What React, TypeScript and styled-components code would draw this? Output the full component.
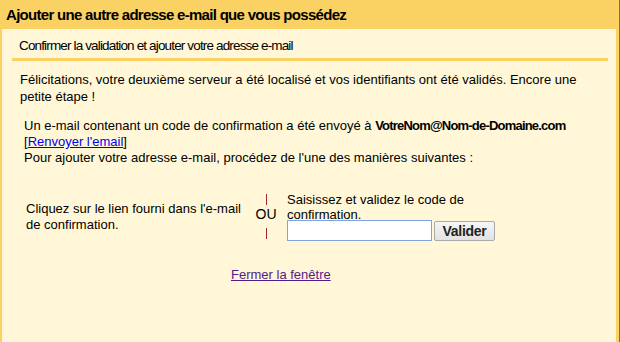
import React from "react";
import styled, { createGlobalStyle } from "styled-components";

const Global = createGlobalStyle`
  html, body { margin: 0; padding: 0; background: #fff7d7; }
  body { font-family: Arial, "Liberation Sans", sans-serif; font-size: 13px; color: #000; }
`;

const Window = styled.div`
  width: 619px;
  height: 342px;
  background: #fad163;
  border-right: 1px solid #3a7fc0;
  display: flex;
  flex-direction: column;
  overflow: hidden;
`;

const TitleBar = styled.div`
  height: 29px;
  flex: none;
  display: flex;
  align-items: center;
  padding: 0 0 1px 6px;
  box-sizing: border-box;
  font-size: 15px;
  letter-spacing: -0.7px;
  font-weight: bold;
  color: #000;
`;

const Body = styled.div`
  flex: 1;
  margin: 0 3px 0 2px;
  background: #fff7d7;
  padding: 0 8px 0 10px;
`;

const SubHeader = styled.div`
  padding: 9px 0 0 7px;
  height: 32px;
  box-sizing: border-box;
  border-bottom: 3px solid #fad163;
  font-size: 13.5px;
  letter-spacing: -0.85px;
  color: #000;
`;

const Para = styled.p<{ $indent?: number; $top?: number; $lh?: number }>`
  margin: ${(p) => p.$top ?? 0}px 0 0 ${(p) => p.$indent ?? 8}px;
  line-height: ${(p) => p.$lh ?? 17}px;
  font-size: 13px;
`;

const Email = styled.b`
  letter-spacing: -0.8px;
`;

const Link = styled.a<{ $visited?: boolean }>`
  color: ${(p) => (p.$visited ? "#551a8b" : "#0000ee")};
  text-decoration: underline;
  cursor: pointer;
`;

const Choices = styled.div`
  display: flex;
  align-items: center;
  margin: 26px 0 0 14px;
`;

const LeftChoice = styled.div`
  width: 229px;
  line-height: 16px;
`;

const OrColumn = styled.div`
  width: 22px;
  display: flex;
  flex-direction: column;
  align-items: center;
  font-size: 14px;
  line-height: 16px;
`;

const RedBar = styled.span<{ $gap: number; $after?: boolean }>`
  width: 1px;
  height: 11px;
  background: #b22222;
  ${(p) => (p.$after ? `margin-top: ${p.$gap}px;` : `margin-bottom: ${p.$gap}px;`)}
`;

const RightChoice = styled.div`
  margin-left: 10px;
  display: flex;
  flex-direction: column;
`;

const Hint = styled.div`
  line-height: 15px;
  width: 190px;
`;

const FormRow = styled.div`
  display: flex;
  align-items: center;
  margin-top: -2px;
`;

const CodeInput = styled.input`
  width: 145px;
  height: 21px;
  box-sizing: border-box;
  border: 1px solid #7ea5e0;
  background: #fff;
  padding: 2px 3px;
  font-family: inherit;
  font-size: 13px;
  outline: none;
`;

const Button = styled.button`
  margin-left: 2px;
  height: 20px;
  width: 61px;
  box-sizing: border-box;
  border: 1px solid #a9a9a9;
  border-radius: 2px;
  background: linear-gradient(#f6f6f6, #e2e2e2);
  font-family: inherit;
  font-size: 14px;
  letter-spacing: -0.3px;
  font-weight: bold;
  color: #222;
  padding: 0;
`;

const Footer = styled.div`
  margin-top: 26px;
  padding-left: 219px;
  font-size: 13px;
`;

export default function App() {
  return (
    <>
      <Global />
      <Window>
        <TitleBar>Ajouter une autre adresse e-mail que vous possédez</TitleBar>
        <Body>
          <SubHeader>Confirmer la validation et ajouter votre adresse e-mail</SubHeader>
          <Para $top={10}>
            Félicitations, votre deuxième serveur a été localisé et vos identifiants ont été validés. Encore une petite étape !
          </Para>
          <Para $indent={12} $top={13} $lh={16}>
            Un e-mail contenant un code de confirmation a été envoyé à <Email>VotreNom@Nom-de-Domaine.com</Email>
            <br />[<Link>Renvoyer l'email</Link>]
            <br />Pour ajouter votre adresse e-mail, procédez de l'une des manières suivantes :
          </Para>
          <Choices>
            <LeftChoice>Cliquez sur le lien fourni dans l'e-mail de confirmation.</LeftChoice>
            <OrColumn>
              <RedBar $gap={1} />
              <span>OU</span>
              <RedBar $gap={6} $after />
            </OrColumn>
            <RightChoice>
              <Hint>Saisissez et validez le code de confirmation.</Hint>
              <FormRow>
                <CodeInput type="text" />
                <Button>Valider</Button>
              </FormRow>
            </RightChoice>
          </Choices>
          <Footer>
            <Link $visited>Fermer la fenêtre</Link>
          </Footer>
        </Body>
      </Window>
    </>
  );
}
